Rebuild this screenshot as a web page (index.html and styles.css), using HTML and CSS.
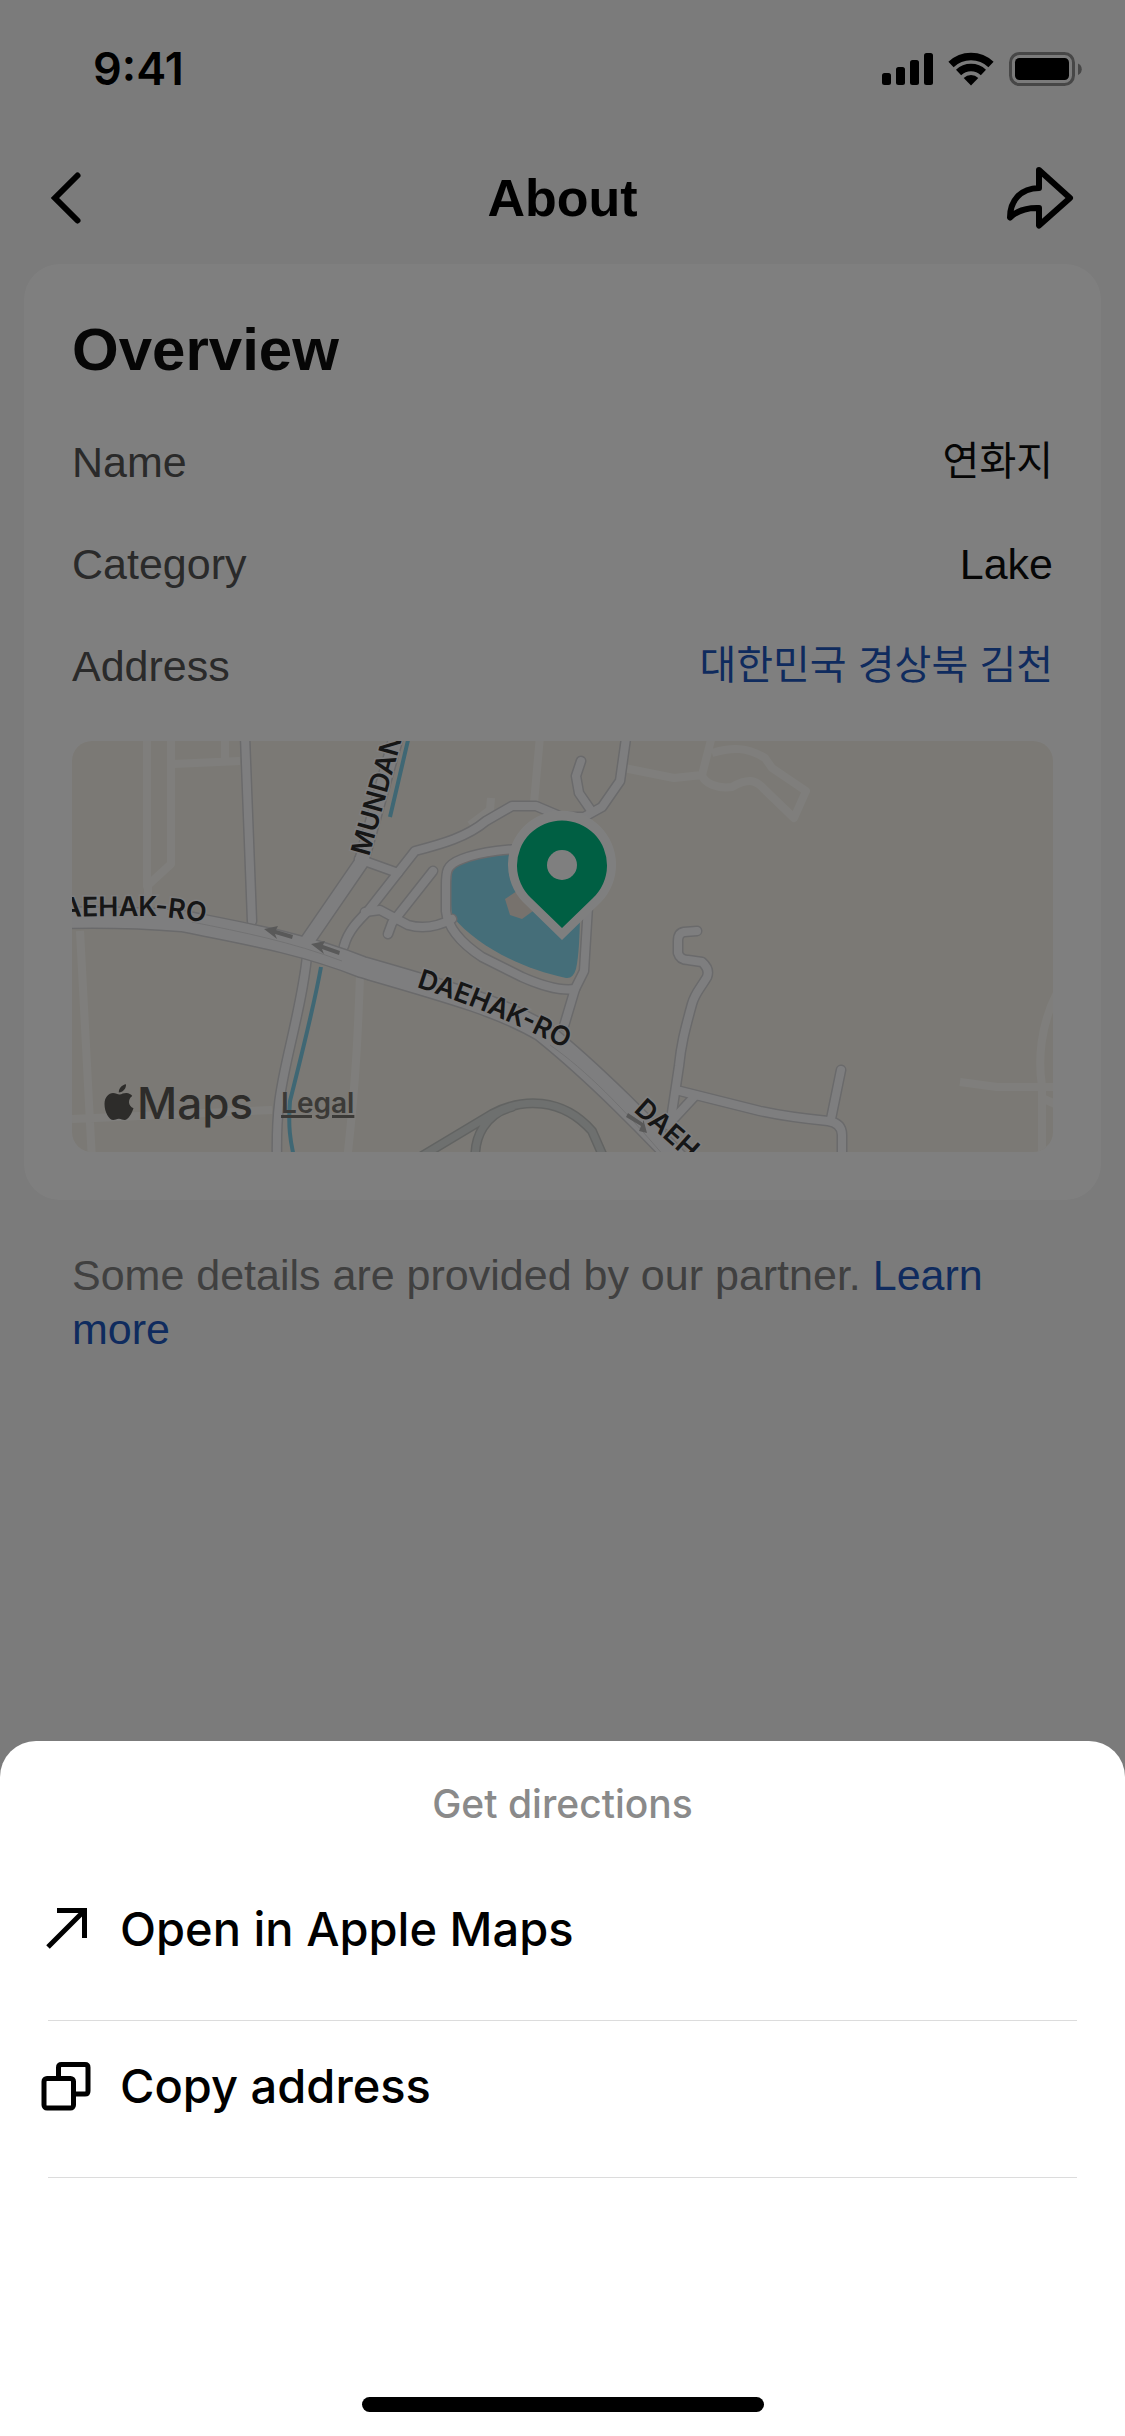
FILE: index.html
```
<!DOCTYPE html>
<html lang="en">
<head>
<meta charset="utf-8">
<meta name="viewport" content="width=device-width, initial-scale=1">
<title>About</title>
<link rel="stylesheet" href="styles.css">
</head>
<body>
<div class="screen">
  <div class="status-bar">
    <span class="status-time">9:41</span>
    <svg class="status-icons" viewBox="0 0 200 34" aria-hidden="true">
      <rect x="0" y="21" width="9" height="12" rx="2.5"/>
      <rect x="14" y="15" width="9" height="18" rx="2.5"/>
      <rect x="28" y="8" width="9" height="25" rx="2.5"/>
      <rect x="42" y="1" width="9" height="32" rx="2.5"/>
      <path d="M69 12.5A29 29 0 0 1 109 12.5M76.6 20.5A18 18 0 0 1 101.4 20.5" fill="none" stroke="#000" stroke-width="7.5"/>
      <path d="M89 33.5L81.7 25.9A10.5 10.5 0 0 1 96.3 25.9Z"/>
      <rect x="128.500" y="1.500" width="63" height="31" rx="9" fill="none" stroke="#000" stroke-opacity=".42" stroke-width="3"/>
      <rect x="133" y="6" width="54" height="22" rx="4.500"/>
      <path d="M196 11.500c5 2 5 9.500 0 11.500z" fill-opacity=".42"/>
    </svg>
  </div>

  <header class="nav">
    <button class="icon-button" type="button" aria-label="Back">
      <svg width="36" height="60" viewBox="0 0 36 60"><path d="M29.500 7.500L7 30L29.500 52.500" fill="none" stroke="#000" stroke-width="6" stroke-linecap="round"/></svg>
    </button>
    <h1 class="nav-title">About</h1>
    <button class="icon-button share" type="button" aria-label="Share">
      <svg width="72" height="72" viewBox="0 0 72 72"><path d="M34 8L65 36L34 63.500V46C22 45.500 13 48 5 55.500C5 39 15 26.500 34 26Z" fill="none" stroke="#000" stroke-width="6" stroke-linejoin="round"/></svg>
    </button>
  </header>

  <main>
    <section class="card">
      <h2 class="card-title">Overview</h2>
      <dl class="facts">
        <div class="fact"><dt>Name</dt><dd lang="ko">연화지</dd></div>
        <div class="fact"><dt>Category</dt><dd>Lake</dd></div>
        <div class="fact"><dt>Address</dt><dd lang="ko"><a href="#directions">대한민국 경상북 김천</a></dd></div>
      </dl>
      <div class="map">
        <svg class="map-canvas" viewBox="0 0 981 411" preserveAspectRatio="xMidYMid slice" role="img" aria-label="Map">
          <rect width="981" height="411" fill="#f7f3ea"/>
          <defs>
            <path id="daehak" d="M-40 178C0 176 60 176 110 180C170 192 230 202 290 226C380 252 430 266 470 290C520 330 580 390 625 440"/>
            <g id="streets">
              <path d="M173 -5L180 180"/>
              <path d="M287 118L326 132"/>
              <path d="M272 205C276 190 286 180 296 170L343 110C370 103 395 96 414 80L440 65H464L490 76H512L530 66L548 40L555 -10"/>
              <path d="M509 20L504 35L507 52L518 68"/>
              <path d="M361 130L320 182L316 193M293 171L308 169L336 184C350 188 365 186 380 178"/>
              <path d="M470 107C435 108 410 110 390 118C374 124 374 130 374 145V170C376 190 395 206 410 216L450 236C475 247 490 250 503 248L512 230L516 165"/>
              <path d="M503 248L492 285"/>
              <path d="M235 215C232 245 225 275 217 310C208 350 204 370 205 420"/>
              <path d="M625 190L612 191Q606 192 606 200V212Q608 219 616 219L630 221Q638 228 635 236C628 248 623 252 620 263C612 292 609 305 607 325L598 385"/>
              <path d="M604 349L688 370C715 376 735 378 756 380Q770 382 770 394V420M769 329L759 378M622 356L596 384"/>
            </g>
            <path id="mundan" d="M234 202L289 122L326 -10"/>
          </defs>
          <g class="lane">
            <path d="M75 -5V145L99 123V-5M101 23L168 20M153 -5V20M76 140V170M8 190L20 420M288 235C286 290 284 340 275 420M0 378L200 369"/>
            <path d="M468 -5L462 62M419 57L418 69L398 84"/>
            <path d="M552 27L602 37L630 34M640 -5L630 34C632 42 645 48 660 46C678 36 685 40 692 48L722 77L734 50L700 27L693 17C675 6 660 6 640 12"/>
            <path d="M888 341L925 346H985M985 252C968 285 966 320 970 345V420M972 358L990 366M970 414L982 404"/>
          </g>
          <path d="M380 124C395 116 430 112 470 114L508 165C508 190 507 215 504 228Q501 238 494 237C450 228 405 205 381 176Q378 170 379 140Z" fill="#8adcf2"/>
          <path d="M433 158L445 150L460 155L461 170L450 178L438 174Z" fill="#eee4da"/>
          <path class="stream" d="M337 -5L318 76M249 226C241 270 228 320 218 360C216 385 218 400 223 420"/>
          <use href="#streets" class="casing"/>
          <use href="#mundan" class="avenue-casing"/>
          <use href="#streets" class="street"/>
          <use href="#daehak" class="highway-casing"/>
          <use href="#mundan" class="avenue"/>
          <use href="#daehak" class="highway"/>
          <path d="M120 181C170 191 220 201 270 220M478 304C515 330 550 366 592 415" class="divider"/>
          <path class="rail-casing" d="M335 424L420 373C450 357 490 356 520 390L535 424M404 424C400 395 415 372 440 366"/>
          <path class="rail" d="M335 424L420 373C450 357 490 356 520 390L535 424M404 424C400 395 415 372 440 366"/>
          <g fill="#b3b3b3">
            <path d="M192 188L206 185L204 189L221 194L220 198L203 193L205 198Z"/>
            <path d="M239 203L253 200L251 204L268 210L267 214L250 208L252 213Z"/>
            <path d="M575 392L567 390L569 385L554 376L556 372L571 382L571 377Z"/>
          </g>
          <defs>
            <path id="label-left" d="M-28 177C0 175 40 175 75 175Q110 176 165 188"/>
            <path id="label-middle" d="M344 246C400 264 440 280 525 324"/>
            <path id="label-right" d="M561 370L660 458"/>
            <path id="label-mundan" d="M297 116L346 -60"/>
          </defs>
          <g class="label">
            <text><textPath href="#label-left">DAEHAK-RO</textPath></text>
            <text><textPath href="#label-middle">DAEHAK-RO</textPath></text>
            <text><textPath href="#label-right">DAEH</textPath></text>
            <text><textPath href="#label-mundan">MUNDAN</textPath></text>
          </g>
          <path d="M490 199L451 161A54 54 0 1 1 529 161Z" fill="#fff"/>
          <path d="M490 187L459 157A45 45 0 1 1 521 157Z" fill="#00be86"/>
          <circle cx="490" cy="124" r="15" fill="#fff"/>
        </svg>
        <div class="map-credit">
          <svg width="30" height="38" viewBox="0 0 30 38" aria-hidden="true"><path d="M15.500 10.500C18 10 19.500 8.800 22.500 8.900C25 9 27 10.200 28.300 12C23.500 15.200 24 22 29.500 24.300C28 29 24.500 36 20.500 36C18.300 36 17.500 34.700 14.900 34.700C12.300 34.700 11.300 36 9.300 36C5 36 .5 28 .5 20C.5 13 4.800 9 9 9C11.800 9 13.600 10.500 15.500 10.500ZM14.800 8.500C14.600 4.500 18 .8 22 .3C22.400 4.500 19 8.300 14.800 8.500Z" fill="#5a5855"/></svg>
          <span class="map-brand">Maps</span>
          <a class="map-legal" href="#legal">Legal</a>
        </div>
      </div>
    </section>
    <p class="note">Some details are provided by our partner. <a href="#learn-more">Learn more</a></p>
  </main>
</div>

<div class="scrim"></div>

<section class="sheet" id="directions" role="dialog" aria-labelledby="sheet-title">
  <h2 class="sheet-title" id="sheet-title">Get directions</h2>
  <ul class="actions">
    <li class="action">
      <button type="button">
        <svg width="54" height="54" viewBox="0 0 54 54" aria-hidden="true"><path d="M18 9.500H45.500V37M45.500 9.500L9 46" fill="none" stroke="#000" stroke-width="5"/></svg>
        Open in Apple Maps
      </button>
    </li>
    <li class="action">
      <button type="button">
        <svg width="54" height="54" viewBox="0 0 54 54" aria-hidden="true"><g fill="none" stroke="#000" stroke-width="5"><rect x="5" y="20.500" width="29.500" height="29.500" rx="3"/><path d="M19.500 20.500V9.500Q19.500 6.500 22.500 6.500H46Q49 6.500 49 9.500V33Q49 36 46 36H34.500"/></g></svg>
        Copy address
      </button>
    </li>
  </ul>
  <div class="home-indicator"></div>
</section>
</body>
</html>
```
FILE: styles.css
```
:root {
  --sans: "Liberation Sans", Arial, "Noto Sans CJK KR", sans-serif;
  --ui: Inter, "Noto Sans CJK KR", sans-serif;
  --link: #1f57bd;
}

* { box-sizing: border-box; margin: 0; padding: 0; }

body {
  min-height: 100vh;
  background: #f6f6f6;
  color: #000;
  font-family: var(--sans);
}

a { color: var(--link); text-decoration: none; }

button {
  border: 0;
  background: none;
  color: inherit;
  font: inherit;
  cursor: pointer;
}

svg { display: block; }

.status-bar {
  display: flex;
  align-items: center;
  justify-content: space-between;
  height: 132px;
  padding: 6px 43px 0 93px;
}

.status-time { font: 600 45px/54px var(--ui); }
.status-icons { width: 200px; height: 34px; }

.nav {
  display: grid;
  grid-template-columns: 1fr auto 1fr;
  align-items: center;
  height: 132px;
  padding: 0 48px;
}

.nav-title { font-size: 52px; line-height: 60px; }
.icon-button { justify-self: start; }
.icon-button.share { justify-self: end; }

.card {
  margin: 0 24px;
  padding: 48px;
  border-radius: 36px;
  background: #fff;
}

.card-title {
  margin-bottom: 23px;
  color: #0c0c0c;
  font-size: 60px;
  line-height: 76px;
}

.facts { margin-bottom: 24px; }

.fact {
  display: flex;
  align-items: center;
  justify-content: space-between;
  height: 102px;
  font-size: 43px;
  line-height: 54px;
}

.fact dt { color: #545454; }
.fact dd { color: #0c0c0c; }
.fact dd:lang(ko) { padding-bottom: 8px; font-family: "Noto Sans CJK KR", sans-serif; font-size: 40px; }

.map {
  position: relative;
  overflow: hidden;
  border-radius: 20px;
}

.map-canvas { width: 100%; height: 411px; }

.lane { fill: none; stroke: #fefdf9; stroke-width: 8; stroke-linejoin: round; }
.stream { fill: none; stroke: #7fcfe8; stroke-width: 4; }
.casing, .street, .rail, .rail-casing { fill: none; stroke-linecap: round; stroke-linejoin: round; }
.casing { stroke: #d4d4d7; stroke-width: 11; }
.street { stroke: #fdfdff; stroke-width: 8; }
.avenue-casing { fill: none; stroke: #d4d4d7; stroke-width: 16; }
.avenue { fill: none; stroke: #fdfdff; stroke-width: 13; }
.highway-casing { fill: none; stroke: #d4d4d7; stroke-width: 23; }
.highway { fill: none; stroke: #fdfdff; stroke-width: 20; }
.divider { fill: none; stroke: #e4e4e6; stroke-width: 1; }
.rail-casing { stroke: #c4c7c5; stroke-width: 10; }
.rail { stroke: #dde0de; stroke-width: 7; }

.label text {
  fill: #2c2c2c;
  stroke: #fdfdff;
  stroke-width: 3;
  paint-order: stroke;
  font: 600 27px var(--ui);
}

.map-credit {
  position: absolute;
  bottom: 22px;
  left: 32px;
  display: flex;
  align-items: center;
}

.map-brand {
  margin: 0 28px 0 3px;
  color: #5a5855;
  font: 500 44px/54px var(--ui);
}

.map-legal {
  color: #76746f;
  font: 600 28px/36px var(--ui);
  text-decoration: underline;
  text-decoration-thickness: 3px;
}

.note {
  padding: 48px 72px;
  color: #808080;
  font-size: 43px;
  line-height: 54px;
}

.scrim {
  position: fixed;
  inset: 0;
  background: rgba(0, 0, 0, .5);
}

.sheet {
  position: fixed;
  right: 0;
  bottom: 0;
  left: 0;
  padding: 36px 0 24px;
  border-radius: 36px 36px 0 0;
  background: #fff;
  font-family: var(--ui);
}

.sheet-title {
  margin-bottom: 33px;
  color: #8a8a8a;
  font-size: 39px;
  font-weight: 500;
  line-height: 54px;
  text-align: center;
}

.actions { list-style: none; }

.action {
  margin: 0 48px;
  padding-bottom: 28px;
  border-bottom: 1px solid #dcdcdc;
}

.action button {
  display: flex;
  align-items: center;
  gap: 27px;
  width: 100%;
  height: 128px;
  margin-left: -9px;
  font-size: 47px;
  font-weight: 500;
  text-align: left;
}

.home-indicator {
  width: 402px;
  height: 15px;
  margin: 219px auto 0;
  border-radius: 8px;
  background: #000;
}
```
